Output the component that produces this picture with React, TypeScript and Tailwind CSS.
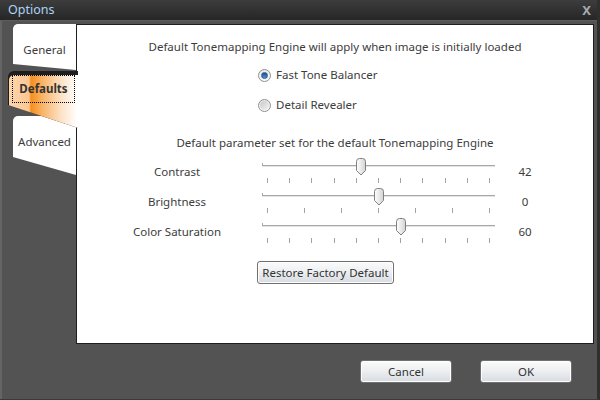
import React from 'react'

type SliderRow = {
  label: string
  value: number
  min: number
  max: number
  ticks: number
}

const sliders: SliderRow[] = [
  { label: 'Contrast', value: 42, min: 0, max: 100, ticks: 11 },
  { label: 'Brightness', value: 0, min: -100, max: 100, ticks: 7 },
  { label: 'Color Saturation', value: 60, min: 0, max: 100, ticks: 11 },
]

function Radio({ checked, label }: { checked: boolean; label: string }) {
  return (
    <div className="flex items-center h-[16px] gap-[5px]">
      <span className="w-[13px] h-[13px] rounded-full border border-[#8e8f8f] bg-gradient-to-b from-[#e9e9e9] to-[#fbfbfb] flex items-center justify-center">
        {checked ? (
          <span className="w-[7px] h-[7px] rounded-full bg-gradient-to-b from-[#1f4e8c] to-[#5b8fcb] border border-[#2a5a96]" />
        ) : (
          <span className="w-[9px] h-[9px] rounded-full bg-gradient-to-br from-[#c9c9c9] to-[#f2f2f2]" />
        )}
      </span>
      <span>{label}</span>
    </div>
  )
}

function Thumb() {
  return (
    <svg width="10" height="18" viewBox="0 0 10 18">
      <defs>
        <linearGradient id="thumbFill" x1="0" y1="0" x2="1" y2="0">
          <stop offset="0" stopColor="#ffffff" />
          <stop offset="1" stopColor="#d3d3d3" />
        </linearGradient>
      </defs>
      <path
        d="M0.5 3.5 Q0.5 0.5 3.5 0.5 H6.5 Q9.5 0.5 9.5 3.5 V12.5 L5 17 L0.5 12.5 Z"
        fill="url(#thumbFill)"
        stroke="#808080"
      />
    </svg>
  )
}

function Slider({ row }: { row: SliderRow }) {
  const frac = (row.value - row.min) / (row.max - row.min)
  return (
    <div className="flex items-start h-[30px]">
      <div className="w-[120px] ml-[40px] pt-[7px] text-center leading-[16px]">{row.label}</div>
      <div className="relative w-[233px] h-[30px] ml-[25px]">
        <div className="absolute left-0 right-0 top-[8px] h-[2px] border-t border-[#a8a8a8] bg-[#e4e4e4]" />
        <div className="absolute left-0 top-[6px] w-px h-[3px] bg-[#a8a8a8]" />
        <div className="absolute left-0 right-0 top-[21px] flex justify-between px-[5px]">
          {Array.from({ length: row.ticks }).map((_, i) => (
            <span key={i} className="w-px h-[5px] bg-[#a3a3a3]" />
          ))}
        </div>
        <div className="absolute top-[1px]" style={{ left: frac * 223 }}>
          <Thumb />
        </div>
      </div>
      <div className="w-[60px] pt-[7px] text-center leading-[16px]">{row.value}</div>
    </div>
  )
}

function DialogButton({ children, className }: { children: React.ReactNode; className?: string }) {
  return (
    <button
      className={`h-[23px] rounded-[3px] border border-[#707070] bg-gradient-to-b from-[#fbfbfb] via-[#eceef0] to-[#d7dce2] shadow-[inset_0_0_0_1px_#ffffff] text-[#333] leading-[20px] ${className ?? ''}`}
    >
      {children}
    </button>
  )
}

export default function App() {
  return (
    <div
      className="w-[600px] h-[400px] flex flex-col bg-[#535353] text-[11.5px] text-[#3c3c3c] border-r-[3px] border-r-[#2f2f2f] border-b border-b-[#3a3a3a]"
      style={{ fontFamily: '"Segoe UI", "Noto Sans", "Open Sans", sans-serif' }}
    >
      {/* Title bar */}
      <div className="h-[21px] flex items-center justify-between pl-[8px] pr-[6px] bg-gradient-to-b from-[#3d3d3d] to-[#262626] border-b border-[#5e5e5e]">
        <span className="text-[#a9d3f5] text-[12.5px] mt-[1px]">Options</span>
        <span className="text-[#a5a9ae] font-bold text-[13px] mt-[2px]">X</span>
      </div>

      <div className="flex-1 flex flex-col pl-[8px] pt-[3px] border-l-[2px] border-l-[#646464]">
        <div className="flex h-[320px]">
          {/* Tabs */}
          <div className="w-[66px] flex flex-col">
            <div className="ml-[3px] w-[63px] h-[46px] bg-white rounded-tl-[5px] [clip-path:polygon(0_0,100%_0,100%_100%,0_40px)] text-center pt-[18px] leading-[16px]">
              General
            </div>
            <div className="relative z-10 mt-px -ml-[2px] w-[70px] h-[57px] bg-[#1e1e1e] rounded-tl-[6px] [clip-path:polygon(0_0,100%_0,100%_100%,0_34px)]">
              <div className="ml-px mt-px h-[55px] rounded-tl-[5px] bg-[linear-gradient(to_right,#fdd6ae_0px,#fbc792_20px,#f58f1c_22px,#f9b56c_34px,#fde2c6_52px,#ffffff_68px)] [clip-path:polygon(0_0,100%_0,100%_100%,0_32px)]">
                <div className="ml-[3px] mt-[4px] w-[63px] h-[28px] border border-dotted border-black flex items-center justify-center font-bold text-[#333]">
                  Defaults
                </div>
              </div>
            </div>
            <div className="-mt-[12px] ml-[3px] w-[63px] h-[59px] bg-white rounded-tl-[5px] [clip-path:polygon(0_0,100%_0,100%_100%,0_41px)] text-center pt-[18px] leading-[16px]">
              Advanced
            </div>
          </div>

          {/* Panel */}
          <div className="w-[518px] h-[320px] bg-white border border-[#1e1e1e] flex flex-col">
            <div className="pt-[14px] text-center leading-[16px]">
              Default Tonemapping Engine will apply when image is initially loaded
            </div>
            <div className="mt-[12px] pl-[181px] flex flex-col gap-[14px]">
              <Radio checked label="Fast Tone Balancer" />
              <Radio checked={false} label="Detail Revealer" />
            </div>
            <div className="mt-[22px] text-center leading-[16px]">
              Default parameter set for the default Tonemapping Engine
            </div>
            <div className="mt-[6px] flex flex-col">
              {sliders.map((row) => (
                <Slider key={row.label} row={row} />
              ))}
            </div>
            <div className="mt-[14px] pl-[180px]">
              <DialogButton className="w-[137px] h-[22px]">Restore Factory Default</DialogButton>
            </div>
          </div>
        </div>

        {/* Dialog buttons */}
        <div className="mt-[16px] flex justify-end gap-[28px] mr-[25px]">
          <DialogButton className="w-[92px]">Cancel</DialogButton>
          <DialogButton className="w-[92px]">OK</DialogButton>
        </div>
      </div>
    </div>
  )
}
